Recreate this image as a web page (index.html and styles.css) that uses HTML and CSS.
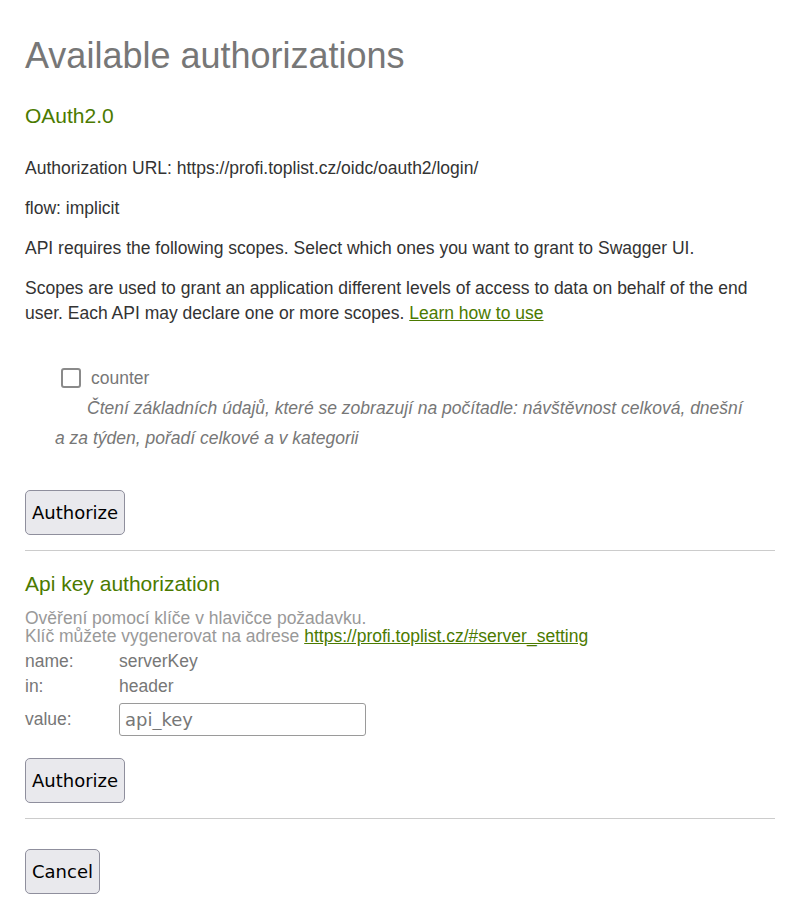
FILE: index.html
```html
<!DOCTYPE html>
<html lang="cs">
<head>
<meta charset="utf-8">
<title>Available authorizations</title>
<link rel="stylesheet" href="styles.css">
</head>
<body>
<div class="modal">
  <h2 class="modal-title">Available authorizations</h2>

  <section class="auth-block">
    <h4 class="scheme-name">OAuth2.0</h4>
    <p class="info">Authorization URL: https://profi.toplist.cz/oidc/oauth2/login/</p>
    <p class="info">flow: implicit</p>
    <p class="info">API requires the following scopes. Select which ones you want to grant to Swagger UI.</p>
    <p class="info">Scopes are used to grant an application different levels of access to data on behalf of the end user. Each API may declare one or more scopes. <a class="link" href="#">Learn how to use</a></p>

    <div class="scopes">
      <label class="scope-check">
        <span class="box"></span>
        <span class="scope-name">counter</span>
      </label>
      <p class="scope-desc">Čtení základních údajů, které se zobrazují na počítadle: návštěvnost celková, dnešní a za týden, pořadí celkové a v kategorii</p>
    </div>

    <div class="actions">
      <button class="btn" type="button">Authorize</button>
    </div>
  </section>

  <hr class="divider">

  <section class="auth-block">
    <h4 class="scheme-name scheme-api">Api key authorization</h4>
    <div class="api-desc">Ověření pomocí klíče v hlavičce požadavku.<br>Klíč můžete vygenerovat na adrese <a class="link" href="#">https://profi.toplist.cz/#server_setting</a></div>
    <div class="kv kv-first">
      <span class="kv-label">name:</span><span class="kv-value">serverKey</span>
    </div>
    <div class="kv">
      <span class="kv-label">in:</span><span class="kv-value">header</span>
    </div>
    <div class="kv kv-input">
      <span class="kv-label">value:</span><input class="key-input" type="text" placeholder="api_key">
    </div>
    <div class="actions actions-api">
      <button class="btn" type="button">Authorize</button>
    </div>
  </section>

  <hr class="divider divider-2">

  <div class="actions actions-cancel">
    <button class="btn" type="button">Cancel</button>
  </div>
</div>
</body>
</html>
```

FILE: styles.css
```css
html, body {
  margin: 0;
  padding: 0;
  background: #ffffff;
}

body {
  font-family: "Liberation Sans", Arial, sans-serif;
  font-size: 17.5px;
  color: #333333;
}

.modal {
  padding: 33px 30px 0 25px;
}

.modal-title {
  margin: 0;
  font-size: 36px;
  line-height: 45px;
  font-weight: normal;
  color: #777777;
}

.scheme-name {
  margin: 23px 0 0;
  font-size: 21px;
  line-height: 30px;
  font-weight: normal;
  color: #4b7a00;
}

.info {
  margin: 0;
  line-height: 25px;
  color: #333333;
}

.scheme-name + .info {
  margin-top: 25px;
}

.info + .info {
  margin-top: 15px;
}

.link {
  color: #4b7a00;
  text-decoration: underline;
}

.scopes {
  margin: 37px 25px 0 30px;
}

.scope-check {
  display: flex;
  align-items: center;
  gap: 10px;
  margin-left: 6px;
  height: 30px;
}

.box {
  width: 16px;
  height: 16px;
  border: 2px solid #8a8a8a;
  border-radius: 3px;
  box-sizing: content-box;
}

.scope-name {
  color: #777777;
}

.scope-desc {
  margin: 0;
  font-style: italic;
  line-height: 30px;
  color: #777777;
  text-indent: 32px;
}

.actions {
  margin-top: 37px;
}

.btn {
  font-family: "DejaVu Sans", Verdana, sans-serif;
  font-size: 18px;
  color: #000000;
  background: #e9e9ed;
  border: 1px solid #8f8f9d;
  border-radius: 5px;
  height: 45px;
  padding: 0 6px;
  cursor: pointer;
}

.divider {
  margin: 15px 0 0;
  border: 0;
  border-top: 1px solid #cccccc;
  height: 0;
}

.scheme-api {
  margin-top: 18px;
}

.api-desc {
  margin-top: 10px;
  color: #999999;
  line-height: 18px;
}

.kv {
  display: flex;
  align-items: center;
  line-height: 25px;
  color: #777777;
}

.kv-first {
  margin-top: 4px;
}

.kv-label {
  width: 94px;
  flex: none;
}

.kv-input {
  margin-top: 4px;
}

.key-input {
  width: 247px;
  height: 33px;
  box-sizing: border-box;
  border: 1px solid #9a9a9a;
  border-radius: 3px;
  padding: 0 5px;
  font-family: "DejaVu Sans", Verdana, sans-serif;
  font-size: 18px;
  color: #333333;
}

.key-input::placeholder {
  color: #777777;
}

.actions-api {
  margin-top: 22px;
}

.divider-2 {
  margin-top: 15px;
}

.actions-cancel {
  margin-top: 30px;
}
```
